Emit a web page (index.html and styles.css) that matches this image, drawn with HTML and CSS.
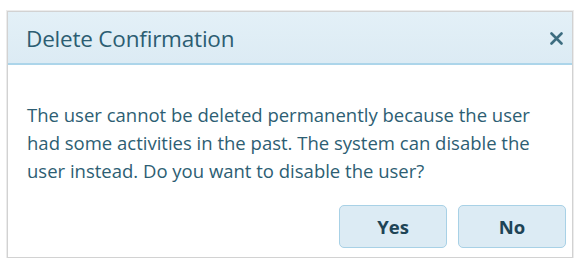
FILE: index.html
```
<!DOCTYPE html>
<html>
<head>
<meta charset="utf-8">
<link rel="stylesheet" href="styles.css">
</head>
<body>
<div class="dialog">
  <div class="header">
    <span class="title">Delete Confirmation</span>
    <span class="close" aria-label="Close">
      <svg width="13" height="13" viewBox="0 0 13 13"><path d="M1.5 1.5L11.5 11.5M11.5 1.5L1.5 11.5" stroke="#3d6d80" stroke-width="2.6" stroke-linecap="round"/></svg>
    </span>
  </div>
  <div class="content">
    <p class="message">The user cannot be deleted permanently because the user had some activities in the past. The system can disable the user instead. Do you want to disable the user?</p>
    <div class="actions">
      <button class="btn">Yes</button>
      <button class="btn">No</button>
    </div>
  </div>
</div>
</body>
</html>
```
FILE: styles.css
```
html, body {
  margin: 0;
  padding: 0;
  background: #ffffff;
}
body {
  padding: 11px 0 0 7px;
  font-family: "Open Sans", "Noto Sans", sans-serif;
}
.dialog {
  width: 564px;
  height: 245px;
  border: 1px solid #d2d2d2;
  box-shadow: 0 0 0 1px #ececec;
  display: flex;
  flex-direction: column;
  background: #fff;
}
.header {
  flex: none;
  background: linear-gradient(#e3f0f7, #dcebf4);
  border-bottom: 2px solid #acd5ea;
  display: flex;
  align-items: center;
  justify-content: space-between;
  padding: 1px 9px 0 18px;
  box-sizing: border-box;
  height: 53px;
}
.title {
  font-size: 22.5px;
  color: #2c5d72;
  letter-spacing: -0.2px;
}
.close {
  display: flex;
  width: 13px;
  height: 13px;
}
.content {
  flex: 1;
  display: flex;
  flex-direction: column;
  padding: 0 6px 9px 19px;
}
.message {
  margin: 36px 0 0 0;
  font-size: 18.5px;
  line-height: 28px;
  color: #2d5e73;
  width: 520px;
  letter-spacing: 0;
}
.actions {
  margin-top: auto;
  display: flex;
  justify-content: flex-end;
  gap: 11px;
}
.btn {
  width: 108px;
  height: 43px;
  border: 1px solid #a8d1e6;
  border-radius: 5px;
  background: #dcebf4;
  font-family: "Open Sans", "Noto Sans", sans-serif;
  font-weight: 700;
  font-size: 18.5px;
  color: #1e4456;
  padding: 0;
}
```
